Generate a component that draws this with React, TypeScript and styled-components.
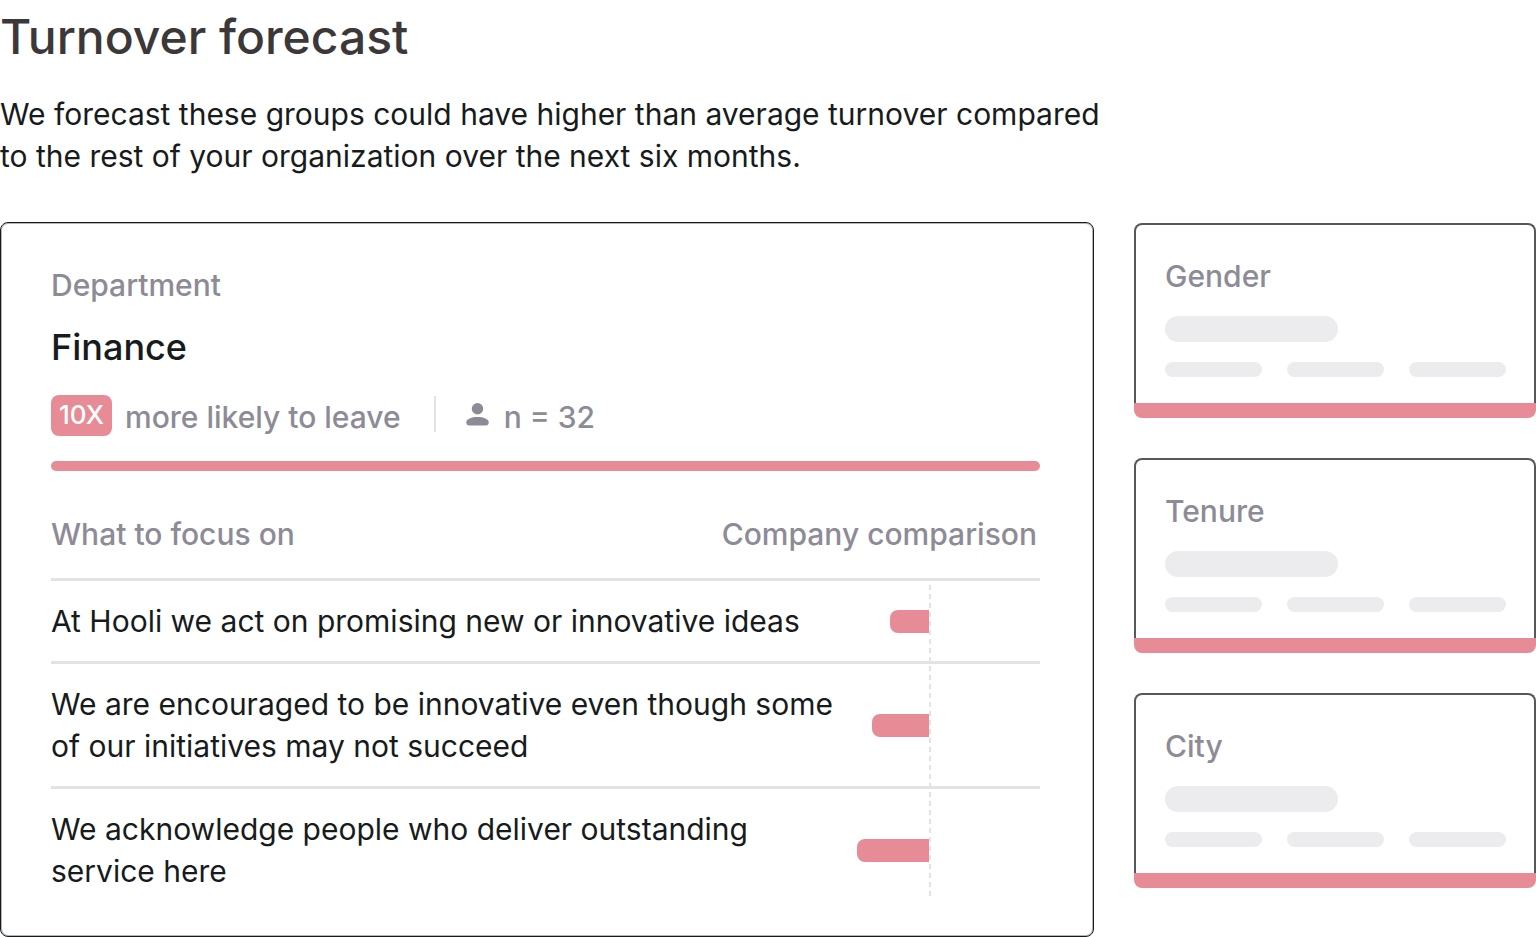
import React from "react";
import styled, { createGlobalStyle } from "styled-components";

const color = {
  ink: "#171b1c",
  title: "#3c3839",
  muted: "#8d8b96",
  accent: "#e78c96",
  line: "#e3e3e4",
  skeleton: "#ececee",
};

const GlobalStyle = createGlobalStyle`
  *, *::before, *::after { box-sizing: border-box; }
  body {
    margin: 0;
    background: #fff;
    color: ${color.ink};
    font-family: Inter, "Liberation Sans", sans-serif;
    font-size: 30px;
    line-height: 42px;
  }
  h1, h2, h3, p { margin: 0; }
`;

const Page = styled.main`
  padding-top: 9px;
`;

const Title = styled.h1`
  color: ${color.title};
  font-size: 48px;
  font-weight: 500;
  line-height: 56px;
`;

const Intro = styled.p`
  max-width: 1120px;
  margin-top: 28px;
`;

const Columns = styled.div`
  display: grid;
  grid-template-columns: minmax(0, 1094fr) minmax(0, 402fr);
  gap: 40px;
  align-items: start;
  margin-top: 45px;
`;

const MainCard = styled.section`
  padding: 41px 53px 25px 50px;
  border: 1px solid ${color.ink};
  border-radius: 8px;
  box-shadow: inset 0 0 0 1px #b4b5b6;
`;

const Label = styled.p`
  color: ${color.muted};
  font-weight: 500;
`;

const GroupName = styled.h2`
  margin-top: 19px;
  font-size: 36px;
  font-weight: 500;
  line-height: 44px;
`;

const Stats = styled.div`
  display: flex;
  align-items: flex-start;
  height: 43px;
  margin-top: 26px;
`;

const Badge = styled.span`
  width: 61px;
  height: 41px;
  border-radius: 8px;
  background: ${color.accent};
  color: #fff;
  font-size: 26px;
  font-weight: 500;
  line-height: 40px;
  text-align: center;
`;

const StatText = styled.span`
  align-self: flex-end;
  margin-left: 13px;
  color: ${color.muted};
  font-weight: 500;
  white-space: nowrap;
`;

const Divider = styled.span`
  width: 2px;
  height: 36px;
  margin: 1px 30px 0 33px;
  background: ${color.line};
`;

const PersonIcon = styled.svg`
  width: 23px;
  height: 23px;
  margin: 8px 2px 0 0;
  fill: ${color.muted};
`;

const AccentRule = styled.div`
  height: 10px;
  margin-top: 23px;
  border-radius: 5px;
  background: ${color.accent};
`;

const TableWrap = styled.div`
  position: relative;
  margin-top: 42px;
`;

const Axis = styled.span`
  position: absolute;
  top: 72px;
  right: 109px;
  bottom: 15px;
  width: 2px;
  background: repeating-linear-gradient(${color.line} 0 5px, transparent 5px 9px);
`;

const Table = styled.table`
  width: 100%;
  border-collapse: separate;
  border-spacing: 0;
  table-layout: fixed;
`;

const BridgeCol = styled.col`
  width: 125px;
`;

const ChartCol = styled.col`
  width: 195px;
`;

const HeadCell = styled.th<{ $end?: boolean }>`
  padding: 0 ${(p) => (p.$end ? 3 : 0)}px 23px 0;
  border-bottom: 3px solid ${color.line};
  color: ${color.muted};
  font-weight: 500;
  text-align: ${(p) => (p.$end ? "right" : "left")};
  white-space: nowrap;
`;

const Cell = styled.td`
  padding: 19px 0;
  border-bottom: 3px solid ${color.line};
  vertical-align: middle;
  tr:last-child > & { border-bottom: 0; }
`;

const Bar = styled.div`
  height: 23px;
  margin: 0 111px 0 auto;
  border-radius: 8px 0 0 8px;
  background: ${color.accent};
`;

const SideList = styled.aside`
  display: grid;
  gap: 40px;
  padding-top: 1px;
`;

const SideBody = styled.div`
  padding: 30px 28px 26px 29px;
  border: 2px solid #565859;
  border-bottom: 0;
  border-radius: 8px 8px 0 0;
`;

const SideBand = styled.div`
  height: 15px;
  border-radius: 0 0 8px 8px;
  background: ${color.accent};
`;

const TitlePill = styled.div`
  width: 173px;
  height: 26px;
  margin-top: 19px;
  border-radius: 13px;
  background: ${color.skeleton};
`;

const PillRow = styled.div`
  display: grid;
  grid-template-columns: repeat(3, 1fr);
  gap: 25px;
  margin-top: 20px;
`;

const Pill = styled.div`
  height: 15px;
  border-radius: 8px;
  background: ${color.skeleton};
`;

const focusItems = [
  { text: "At Hooli we act on promising new or innovative ideas", gap: 39 },
  { text: "We are encouraged to be innovative even though some of our initiatives may not succeed", gap: 57 },
  { text: "We acknowledge people who deliver outstanding service here", gap: 72 },
];

const SideCard = ({ name }: { name: string }) => (
  <section>
    <SideBody>
      <Label>{name}</Label>
      <TitlePill />
      <PillRow>
        <Pill />
        <Pill />
        <Pill />
      </PillRow>
    </SideBody>
    <SideBand />
  </section>
);

export default function App() {
  return (
    <Page>
      <GlobalStyle />
      <Title>Turnover forecast</Title>
      <Intro>
        We forecast these groups could have higher than average turnover compared to the rest of your organization over
        the next six months.
      </Intro>
      <Columns>
        <MainCard>
          <Label>Department</Label>
          <GroupName>Finance</GroupName>
          <Stats>
            <Badge>10X</Badge>
            <StatText>more likely to leave</StatText>
            <Divider />
            <PersonIcon viewBox="0 0 23 23" aria-hidden="true">
              <circle cx="11.5" cy="5.7" r="5.7" />
              <path d="M0.3 19.2C0.3 16 5.6 14 11.5 14S22.7 16 22.7 19.2C22.7 21.3 21.6 22.4 19.8 22.4H3.2C1.4 22.4 0.3 21.3 0.3 19.2Z" />
            </PersonIcon>
            <StatText>n = 32</StatText>
          </Stats>
          <AccentRule />
          <TableWrap>
            <Table>
              <colgroup>
                <col />
                <BridgeCol />
                <ChartCol />
              </colgroup>
              <thead>
                <tr>
                  <HeadCell scope="col">What to focus on</HeadCell>
                  <HeadCell scope="col" colSpan={2} $end>
                    Company comparison
                  </HeadCell>
                </tr>
              </thead>
              <tbody>
                {focusItems.map((item) => (
                  <tr key={item.text}>
                    <Cell colSpan={2}>{item.text}</Cell>
                    <Cell>
                      <Bar style={{ width: item.gap }} />
                    </Cell>
                  </tr>
                ))}
              </tbody>
            </Table>
            <Axis />
          </TableWrap>
        </MainCard>
        <SideList>
          <SideCard name="Gender" />
          <SideCard name="Tenure" />
          <SideCard name="City" />
        </SideList>
      </Columns>
    </Page>
  );
}
